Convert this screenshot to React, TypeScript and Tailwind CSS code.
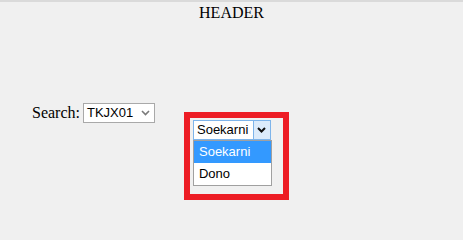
import React from "react";

function Chevron({ color, w = 2 }: { color: string; w?: number }) {
  return (
    <svg width="9" height="6" viewBox="0 0 9 6">
      <polyline points="1,1 4.5,4.5 8,1" fill="none" stroke={color} strokeWidth={w} />
    </svg>
  );
}

export default function App() {
  return (
    <div className="w-[463px] h-[240px] bg-[#f0f0f0] border-t-2 border-[#dadada] overflow-hidden" style={{ fontFamily: '"Liberation Serif", serif' }}>
      <div className="text-center text-[16px] leading-[18px] pt-[2px] text-black">HEADER</div>
      <div className="flex items-start pl-[32px] mt-[81px]">
        <div className="flex items-center">
          <span className="text-[16px] leading-[18px] text-black">Search:</span>
          <div className="ml-[3px] w-[72px] h-[20px] bg-white border border-[#a9a9a9] flex items-center justify-between pl-[3px] pr-[4px]" style={{ fontFamily: '"Liberation Sans", sans-serif' }}>
            <span className="text-[13px] leading-[16px] text-black">TKJX01</span>
            <Chevron color="#7a7a7a" w={1.6} />
          </div>
        </div>
        <div className="ml-[29px] mt-[9px] w-[105px] h-[88px] border-[6px] border-[#ed1c24] pl-[3px] pt-[2px] relative" style={{ fontFamily: '"Liberation Sans", sans-serif' }}>
          <div className="relative w-[78px]">
            <div className="w-[78px] h-[20px] bg-white border border-[#7eb4ea] flex items-stretch">
              <span className="flex-1 text-[13px] leading-[18px] text-black pl-[3px]">Soekarni</span>
              <div className="w-[17px] bg-[#dcebfb] border-l border-[#7eb4ea] flex items-center justify-center">
                <Chevron color="#111" w={2} />
              </div>
            </div>
            <div className="absolute left-0 top-[20px] w-[79px] bg-white border border-[#a0a0a0]">
              <div className="h-[22px] bg-[#3399ff] text-white text-[13px] leading-[22px] pl-[5px]">Soekarni</div>
              <div className="h-[22px] text-black text-[13px] leading-[22px] pl-[5px]">Dono</div>
            </div>
          </div>
        </div>
      </div>
    </div>
  );
}
